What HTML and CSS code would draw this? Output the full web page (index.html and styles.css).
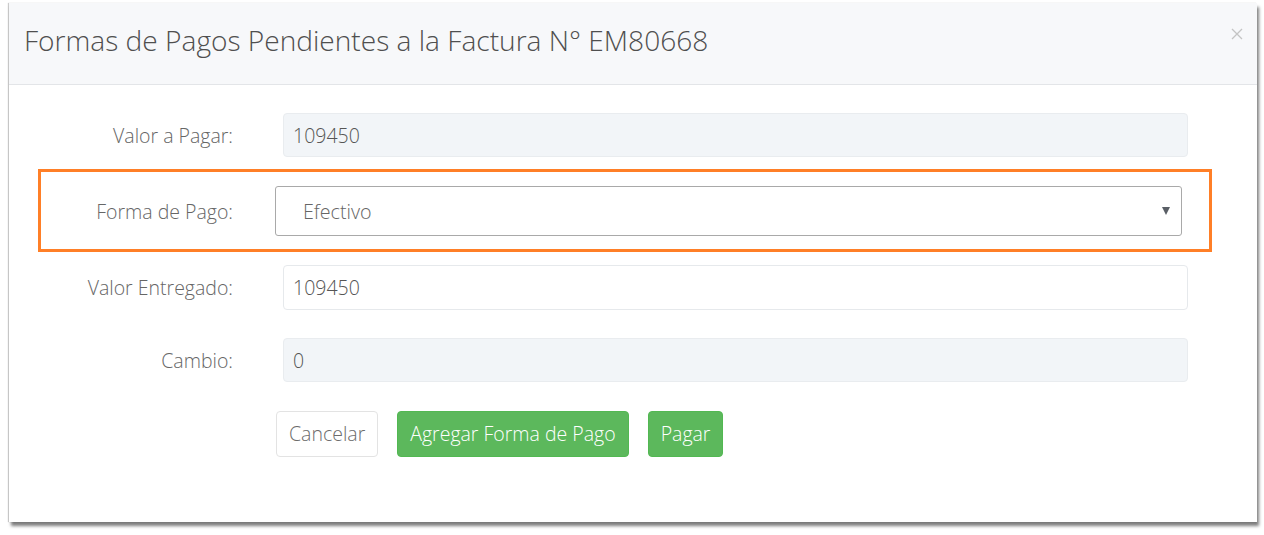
FILE: index.html
```html
<!DOCTYPE html>
<html lang="es">
<head>
<meta charset="utf-8">
<title>Formas de Pago</title>
<link rel="stylesheet" href="styles.css">
</head>
<body>
<div class="modal">
  <div class="modal-header">
    <h4 class="modal-title">Formas de Pagos Pendientes a la Factura N° EM80668</h4>
    <button class="close" aria-label="Cerrar">
      <svg width="12" height="12" viewBox="0 0 12 12"><path d="M1 1 L11 11 M11 1 L1 11" stroke="#c4c4c4" stroke-width="1.3" fill="none"/></svg>
    </button>
  </div>
  <div class="modal-body">
    <div class="row row-1">
      <label class="lbl">Valor a Pagar:</label>
      <div class="field readonly">109450</div>
    </div>
    <div class="highlight">
      <label class="lbl lbl-h">Forma de Pago:</label>
      <div class="select">
        <span>Efectivo</span>
        <span class="caret"></span>
      </div>
    </div>
    <div class="row row-3">
      <label class="lbl">Valor Entregado:</label>
      <div class="field">109450</div>
    </div>
    <div class="row row-4">
      <label class="lbl">Cambio:</label>
      <div class="field readonly">0</div>
    </div>
    <div class="actions">
      <button class="btn btn-default">Cancelar</button>
      <button class="btn btn-success">Agregar Forma de Pago</button>
      <button class="btn btn-success">Pagar</button>
    </div>
  </div>
</div>
</body>
</html>
```
FILE: styles.css
```css
* { box-sizing: border-box; }
html, body { margin: 0; padding: 0; background: #fff; }
body {
  font-family: "Open Sans", "Liberation Sans", sans-serif;
  color: #555;
  padding: 3px 0 0 9px;
  min-height: 535px;
}
.modal {
  width: 1248px;
  height: 519px;
  background: #fff;
  box-shadow: -1px 0 1px rgba(0,0,0,0.2), 2px 4px 3px rgba(0,0,0,0.5);
  position: relative;
}
.modal-header {
  height: 82px;
  background: #f7f8fa;
  border-bottom: 1px solid #e3e5e8;
  padding: 0 0 0 15px;
  display: flex;
  align-items: center;
}
.modal-title {
  margin: 0;
  font-size: 28.1px;
  font-weight: 300;
  color: #4f4f4f;
  padding-bottom: 8px;
}
.close {
  position: absolute;
  right: 13px;
  top: 24px;
  border: 0;
  background: transparent;
  padding: 0;
  width: 14px;
  height: 14px;
  display: flex;
  align-items: center;
  justify-content: center;
}
.modal-body {
  padding-top: 28px;
}
.row {
  display: flex;
  align-items: center;
}
.lbl {
  width: 224px;
  text-align: right;
  font-size: 19.5px;
  font-weight: 300;
  color: #666;
  flex: none;
}
.field {
  margin-left: 50px;
  width: 905px;
  height: 45px;
  border: 1px solid #e6e9ec;
  border-radius: 4px;
  padding-left: 9px;
  display: flex;
  align-items: center;
  font-size: 19.5px;
  font-weight: 300;
  color: #555;
  background: #fff;
}
.field.readonly {
  background: #f2f5f8;
  border-color: #e9ecef;
}
.row-1 .field { height: 44px; }
.highlight {
  margin: 12px 0 0 29px;
  width: 1174px;
  height: 83px;
  border: 3px solid #ff7f27;
  display: flex;
  align-items: center;
  padding-top: 1px;
}
.lbl-h {
  width: 192px;
}
.select {
  margin-left: 42px;
  width: 907px;
  height: 50px;
  border: 1px solid #a9a9a9;
  border-radius: 3px;
  display: flex;
  align-items: center;
  justify-content: space-between;
  padding: 0 11px 0 27px;
  font-size: 19.7px;
  font-weight: 300;
  color: #666;
  background: #fff;
}
.caret {
  width: 0;
  height: 0;
  border-left: 4px solid transparent;
  border-right: 4px solid transparent;
  border-top: 8px solid #5a5f66;
}
.row-3 { margin-top: 13px; }
.row-4 { margin-top: 28px; }
.row-4 .field { height: 44px; }
.actions {
  margin: 29px 0 0 267px;
  display: flex;
  gap: 19px;
}
.btn {
  font-family: "Open Sans", "Liberation Sans", sans-serif;
  height: 46px;
  font-size: 19.5px;
  font-weight: 300;
  border-radius: 4px;
  border: 1px solid;
  padding: 0 12px;
  cursor: pointer;
  line-height: 1;
}
.btn-default {
  background: #fff;
  border-color: #e3e3e3;
  color: #6c6c6c;
}
.btn-success {
  background: #5cb85c;
  border-color: #52b852;
  color: #fff;
}
```
